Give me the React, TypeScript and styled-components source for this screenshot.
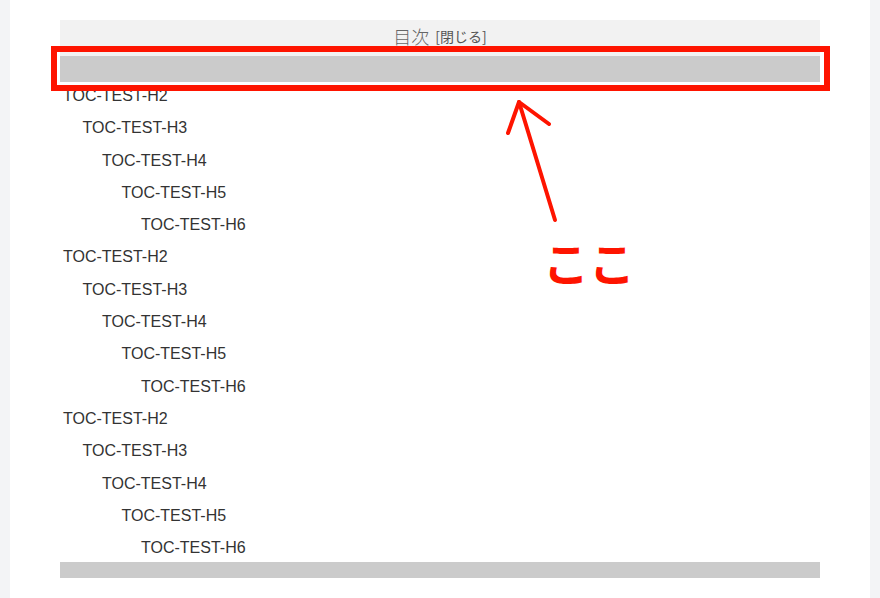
import React from "react";
import styled, { createGlobalStyle } from "styled-components";

const GlobalStyle = createGlobalStyle`
  html, body {
    margin: 0;
    padding: 0;
    background: #f3f4f6;
  }
  body {
    font-family: "Liberation Sans", Arial, sans-serif;
  }
`;

const Page = styled.div`
  position: relative;
  margin: 0 10px;
  width: 860px;
  height: 598px;
  background: #ffffff;
  padding: 20px 50px 0;
  box-sizing: border-box;
`;

const TocBox = styled.div`
  display: flex;
  flex-direction: column;
  width: 760px;
`;

const TocHeader = styled.div`
  display: flex;
  align-items: center;
  justify-content: center;
  height: 36px;
  padding-bottom: 4px;
  box-sizing: border-box;
  background: #f2f2f2;
  font-family: "Noto Sans CJK JP", sans-serif;
  color: #666666;
  line-height: normal;
`;

const TocTitle = styled.span`
  font-size: 18px;
  font-weight: 300;
  margin-right: 6px;
`;

const ToggleLink = styled.span`
  font-size: 14px;
  color: #555555;
`;

const Bar = styled.div<{ $h: number }>`
  height: ${(p) => p.$h}px;
  background: #cbcbcb;
`;

const TocList = styled.ul`
  list-style: none;
  margin: 0;
  padding: 0;
  display: flex;
  flex-direction: column;
  gap: 4.46px;
`;

const TocItem = styled.li<{ $level: number }>`
  font-size: 16px;
  line-height: 27.84px;
  color: #333333;
  padding-left: ${(p) => 3 + (p.$level - 2) * 19.5}px;
`;

const Highlight = styled.div`
  position: absolute;
  left: 41px;
  top: 46px;
  width: 779px;
  height: 45px;
  border: 6px solid #fe1400;
  box-sizing: border-box;
  pointer-events: none;
`;

const ArrowSvg = styled.svg`
  position: absolute;
  left: 480px;
  top: 90px;
  overflow: visible;
`;

const Note = styled.span`
  position: absolute;
  left: 533px;
  top: 238px;
  font-family: "Noto Sans CJK JP", sans-serif;
  font-size: 46px;
  font-weight: 700;
  line-height: 1;
  color: #fe1400;
  letter-spacing: 0px;
`;

const levels = [2, 3, 4, 5, 6, 2, 3, 4, 5, 6, 2, 3, 4, 5, 6];

export default function App() {
  return (
    <>
      <GlobalStyle />
      <Page>
        <TocBox>
          <TocHeader>
            <TocTitle>目次</TocTitle>
            <ToggleLink>[閉じる]</ToggleLink>
          </TocHeader>
          <Bar $h={26} />
          <TocList>
            {levels.map((lv, i) => (
              <TocItem key={i} $level={lv}>
                TOC-TEST-H{lv}
              </TocItem>
            ))}
          </TocList>
          <Bar $h={16} />
        </TocBox>
        <Highlight />
        <ArrowSvg width="80" height="140" viewBox="490 90 80 140">
          <g
            fill="none"
            stroke="#fe1400"
            strokeWidth="4"
            strokeLinecap="round"
            strokeLinejoin="round"
          >
            <polyline points="555,220 519,102" />
            <polyline points="508,133 519,102 549,124" />
          </g>
        </ArrowSvg>
        <Note>ここ</Note>
      </Page>
    </>
  );
}
